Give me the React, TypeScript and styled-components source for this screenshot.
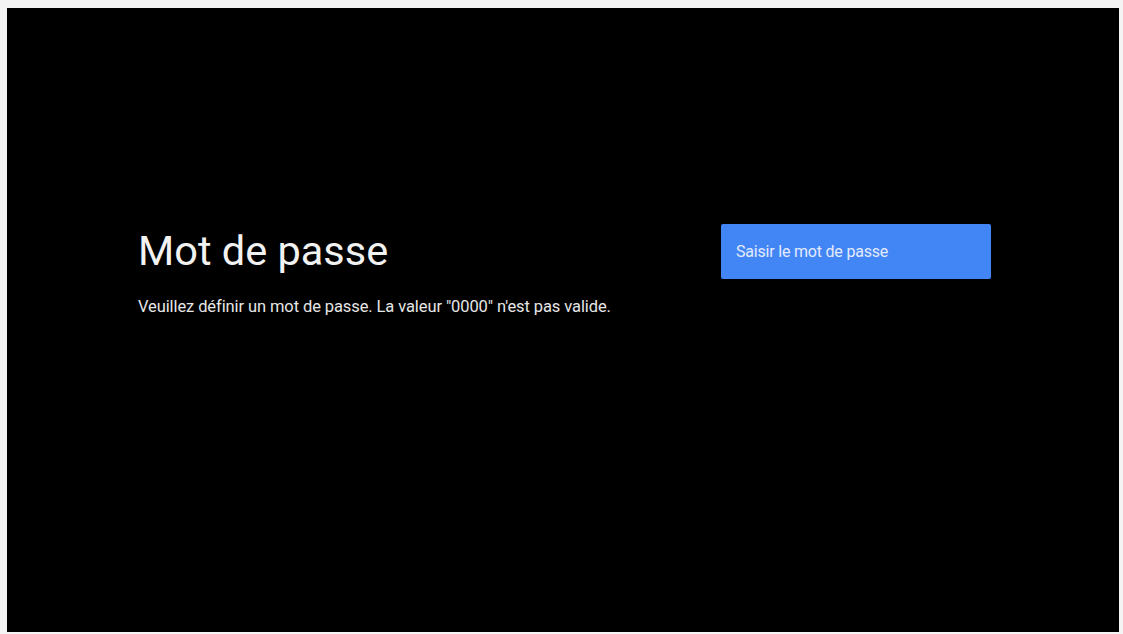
import styled, { createGlobalStyle } from "styled-components";

const GlobalStyle = createGlobalStyle`
  html, body {
    margin: 0;
    padding: 0;
    background: #f4f4f4;
  }
  body {
    font-family: Roboto, "Noto Sans", sans-serif;
  }
`;

const Page = styled.div`
  width: 1123px;
  height: 634px;
  padding: 8px 4px 2px 7px;
  box-sizing: border-box;
`;

const Screen = styled.main`
  width: 100%;
  height: 100%;
  background: #000000;
  display: flex;
  align-items: flex-start;
  padding: 216px 0 0 131px;
  box-sizing: border-box;
`;

const Info = styled.section`
  width: 583px;
  display: flex;
  flex-direction: column;
`;

const Title = styled.h1`
  margin: 3px 0 0 0;
  font: normal normal 400 41.5px/48px Roboto, sans-serif;
  color: #f2f2f2;
`;

const Description = styled.p`
  margin: 22px 0 0 0;
  font: normal normal 400 16.5px/20px Roboto, sans-serif;
  color: #e6e6e6;
  letter-spacing: -0.1px;
`;

const PasswordButton = styled.button`
  width: 270px;
  height: 55px;
  margin-top: 0;
  padding: 0 0 0 15px;
  border: none;
  border-radius: 2px;
  background: #4285f4;
  color: #e4ebff;
  text-align: left;
  font: normal normal 400 16px/18px Roboto, sans-serif;
  letter-spacing: -0.2px;
  cursor: pointer;
`;

const App = () => {
  return (
    <>
      <GlobalStyle />
      <Page>
        <Screen>
          <Info>
            <Title>Mot de passe</Title>
            <Description>
              Veuillez définir un mot de passe. La valeur "0000" n'est pas valide.
            </Description>
          </Info>
          <PasswordButton>Saisir le mot de passe</PasswordButton>
        </Screen>
      </Page>
    </>
  );
};

export default App;
